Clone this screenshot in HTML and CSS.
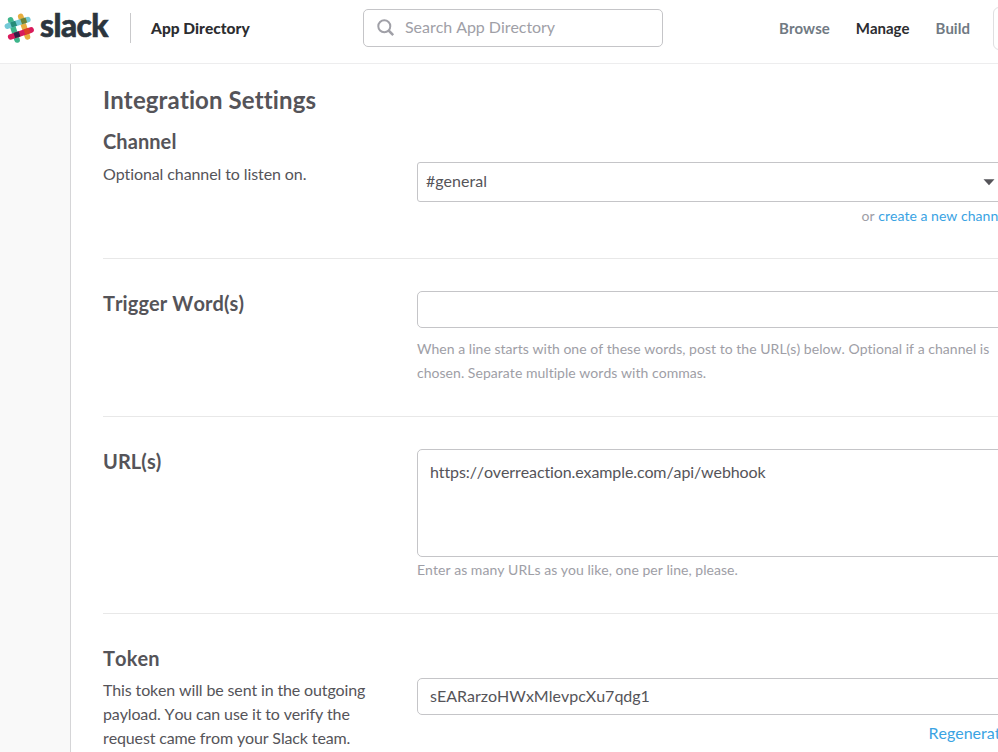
FILE: index.html
```html
<!DOCTYPE html>
<html lang="en">
<head>
<meta charset="utf-8">
<title>App Directory</title>
<link rel="stylesheet" href="styles.css">
</head>
<body>
<header class="topbar">
  <a class="brand">
    <svg class="mark" width="31" height="31" viewBox="0 0 31 31" fill="none" stroke-width="5.6" stroke-linecap="round">
      <path stroke="#e6ad3f" d="M16.7 3.4 23.5 23.8"/>
      <path stroke="#3eb58b" d="M6.6 6.8 13.1 27"/>
      <path stroke="#73c9d6" d="M3.4 13.2 23.8 6.6"/>
      <path stroke="#d91b5c" d="M6.7 23.8 27.1 17"/>
      <g stroke="none">
        <path fill="#248b78" d="m6.1 9.4 5.1-1.7 1.8 5.1-5.2 1.7z"/>
        <path fill="#6d8234" d="m16.3 6.1 5.2-1.7 1.7 5.2-5.2 1.7z"/>
        <path fill="#362047" d="m9.5 19.9 5.2-1.7 1.7 5.2-5.2 1.7z"/>
        <path fill="#dc3f26" d="m19.6 16.5 5.2-1.7 1.7 5.2-5.2 1.7z"/>
      </g>
    </svg>
    <span class="wordmark">slack</span>
  </a>
  <span class="product">App Directory</span>
  <div class="search">
    <svg width="18" height="18" viewBox="0 0 18 18" fill="none" stroke="#a0a0a7" stroke-width="2"><circle cx="7.3" cy="7.2" r="6"/><path stroke-width="2.5" d="m11.6 11.5 4.6 4.6"/></svg>
    <span>Search App Directory</span>
  </div>
  <nav class="nav">
    <a>Browse</a>
    <a class="current">Manage</a>
    <a>Build</a>
  </nav>
  <div class="account"></div>
</header>
<main class="page">
  <div class="content">
    <h1>Integration Settings</h1>
    <section class="row channel">
      <div class="label"><h2>Channel</h2><p>Optional channel to listen on.</p></div>
      <div class="field low">
        <div class="select"><span>#general</span><svg width="12" height="7" viewBox="0 0 12 7"><path fill="#555459" d="M.5.3h11L6 6.3z"/></svg></div>
        <p class="hint right">or <a>create a new channel</a></p>
      </div>
    </section>
    <section class="row trigger">
      <div class="label"><h2>Trigger Word(s)</h2></div>
      <div class="field">
        <div class="input"></div>
        <p class="hint spaced">When a line starts with one of these words, post to the URL(s) below. Optional if a channel is<br>chosen. Separate multiple words with commas.</p>
      </div>
    </section>
    <section class="row urls">
      <div class="label"><h2>URL(s)</h2></div>
      <div class="field">
        <div class="input area">https://overreaction.example.com/api/webhook</div>
        <p class="hint">Enter as many URLs as you like, one per line, please.</p>
      </div>
    </section>
    <section class="row token">
      <div class="label"><h2>Token</h2><p>This token will be sent in the outgoing payload. You can use it to verify the request came from your Slack team.</p></div>
      <div class="field low">
        <div class="input">sEARarzoHWxMlevpcXu7qdg1</div>
        <p class="regen"><a>Regenerate</a></p>
      </div>
    </section>
  </div>
</main>
</body>
</html>
```
FILE: styles.css
```css
* { box-sizing: border-box; }
body {
  margin: 0;
  height: 752px;
  overflow: hidden;
  font: 16px/24px Lato, sans-serif;
  font-variant-ligatures: none;
  font-kerning: none;
  color: #555459;
  background: #f9f9f9;
}
h1, h2, p { margin: 0; }
a { color: #3aa3e3; }

.topbar {
  display: flex;
  width: 998px;
  height: 64px;
  overflow: hidden;
  background: #fff;
  border-bottom: 1px solid #ededee;
}
.topbar > * { flex: none; }
.brand {
  display: flex;
  width: 131px;
  height: 30px;
  margin-top: 13px;
  padding-left: 4px;
  border-right: 1px solid #c9c9cb;
}
.mark { flex: none; }
.wordmark {
  margin: -6px 0 0 5px;
  color: #2b353e;
  font-size: 31.5px;
  font-weight: 900;
  line-height: 36px;
  letter-spacing: -0.5px;
  -webkit-text-stroke: 0.6px #2b353e;
}
.product {
  width: 232px;
  padding: 16px 0 0 20px;
  color: #2c2d30;
  font-size: 15.5px;
  font-weight: 900;
}
.search {
  display: flex;
  align-items: center;
  gap: 10px;
  width: 300px;
  height: 38px;
  margin-top: 9px;
  padding: 0 0 2px 13px;
  border: 1px solid #c5c5c8;
  border-radius: 5px;
  color: #a0a0a7;
  letter-spacing: -0.06px;
}
.search svg { margin-top: 2px; }
.search span { margin-top: -1px; }
.nav {
  display: flex;
  gap: 26px;
  width: 330px;
  padding: 16px 0 0 116px;
  font-size: 15px;
  font-weight: 700;
}
.nav a { color: #717a83; }
.nav .current { color: #2c2d30; }
.account {
  width: 80px;
  height: 43px;
  margin-top: 7px;
  border: 1px solid #dfdfe1;
  border-radius: 6px;
}

.page {
  width: 928px;
  height: 688px;
  overflow: hidden;
  margin-left: 70px;
  padding: 20px 0 0 32px;
  background: #fff;
  border-left: 1px solid #d5d5d7;
}
.content { width: 906px; }
h1 { height: 45px; font-size: 24px; line-height: 32px; font-weight: 700; letter-spacing: 0.1px; }
h2 { font-size: 20px; line-height: 24px; font-weight: 700; letter-spacing: 0.08px; }
.label p { margin-top: 8px; letter-spacing: -0.14px; }
.row { display: flex; border-bottom: 1px solid #e8e8e8; }
.channel { height: 130px; }
.channel .label p { margin-top: 9px; letter-spacing: -0.1px; }
.trigger { height: 158px; padding-top: 32px; }
.urls { height: 197px; padding-top: 32px; }
.token { padding-top: 32px; border: 0; }
.label { width: 314px; padding-right: 44px; }
.field { flex: 1; }
.field.low { padding-top: 33px; }
.token .low { padding-top: 32px; }
.select {
  display: flex;
  justify-content: space-between;
  align-items: center;
  height: 40px;
  padding: 0 13px 0 8px;
  border: 1px solid #c5c5c8;
  border-radius: 3px;
}
.select span { margin-top: -2px; }
.input {
  height: 37px;
  padding: 5px 12px;
  border: 1px solid #c5c5c8;
  border-radius: 5px;
}
.area { height: 108px; padding-top: 10px; letter-spacing: -0.11px; }
.hint { font-size: 14px; color: #9e9ea6; letter-spacing: 0.03px; }
.area + .hint { margin-top: 1px; }
.spaced { margin-top: 9px; }
.right { margin-top: 2px; text-align: right; }
.regen { margin-top: 6px; text-align: right; }
```
